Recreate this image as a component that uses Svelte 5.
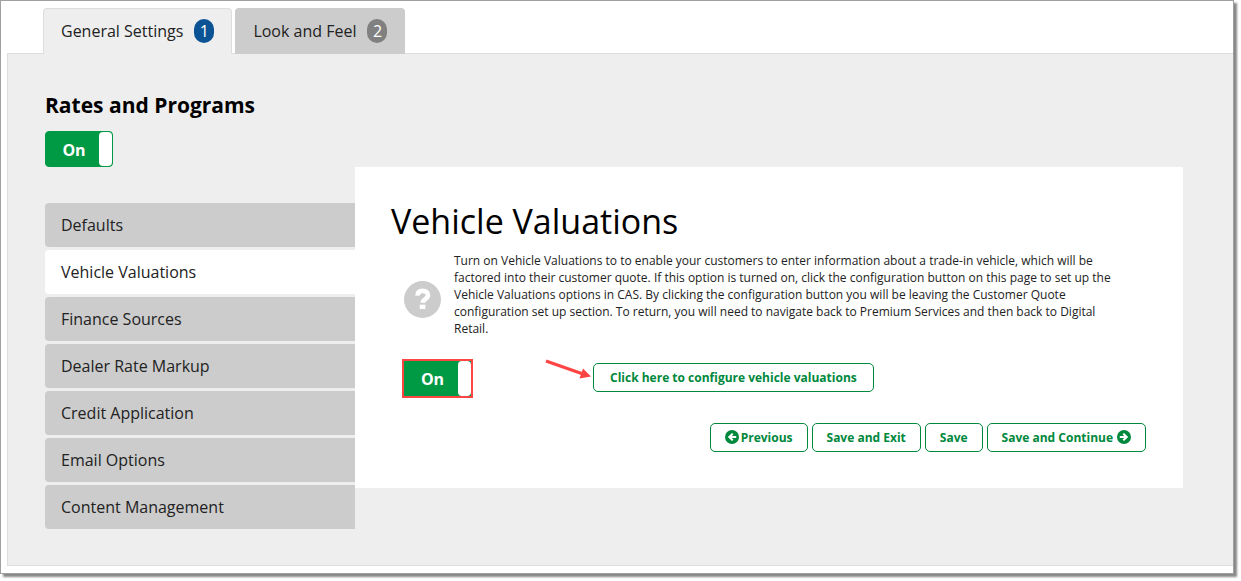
<script lang="ts">
  type Tab = { step: number; label: string };

  const tabs: Tab[] = [
    { step: 1, label: "General Settings" },
    { step: 2, label: "Look and Feel" },
  ];

  const sections = [
    "Defaults",
    "Vehicle Valuations",
    "Finance Sources",
    "Dealer Rate Markup",
    "Credit Application",
    "Email Options",
    "Content Management",
  ];

  let activeTab = $state(1);
  let activeSection = $state("Vehicle Valuations");
  let programsOn = $state(true);
  let valuationsOn = $state(true);
</script>

{#snippet arrowIcon(direction: "left" | "right")}
  <svg
    class="btn__icon"
    class:btn__icon--left={direction === "left"}
    viewBox="0 0 14 14"
    aria-hidden="true"
  >
    <circle cx="7" cy="7" r="7" fill="currentColor" />
    <path d="M2.8 5.9h4.3L5.5 4.3 7 2.9 11.2 7 7 11.1 5.5 9.7l1.6-1.6H2.8z" fill="#fff" />
  </svg>
{/snippet}

<div class="window">
  <nav class="tabs" aria-label="Configuration steps">
    {#each tabs as tab (tab.step)}
      <button
        class="tabs__item"
        class:tabs__item--active={tab.step === activeTab}
        onclick={() => (activeTab = tab.step)}
      >
        <span>{tab.label}</span>
        <span class="tabs__badge">{tab.step}</span>
      </button>
    {/each}
  </nav>

  <main class="panel">
    <h2 class="panel__title">Rates and Programs</h2>
    <label class="toggle">
      <input
        class="toggle__input"
        type="checkbox"
        aria-label="Rates and Programs"
        bind:checked={programsOn}
      />
      <span class="toggle__text">{programsOn ? "On" : "Off"}</span>
      <span class="toggle__handle"></span>
    </label>

    <div class="panel__body">
      <ul class="sections">
        {#each sections as section (section)}
          <li>
            <a
              class="sections__link"
              class:sections__link--active={section === activeSection}
              href="#{section.toLowerCase().replaceAll(' ', '-')}"
              onclick={() => (activeSection = section)}>{section}</a
            >
          </li>
        {/each}
      </ul>

      <section class="card">
        <h1 class="card__title">Vehicle Valuations</h1>

        <div class="help">
          <svg class="help__icon" viewBox="0 0 37 37" aria-hidden="true">
            <circle cx="18.500" cy="18.500" r="18.500" fill="#ccc" />
            <path
              d="M13.400 14.600C13.600 11 16 9.900 18.700 9.900c3.300 0 5.300 1.600 5.300 4.200 0 4.400-5.200 3.700-5.200 7.700"
              fill="none"
              stroke="#fff"
              stroke-width="4.600"
            />
            <path d="M15.800 23.700h5.600V28h-5.600z" fill="#fff" />
          </svg>
          <p class="help__text">
            Turn on Vehicle Valuations to to enable your customers to enter
            information about a trade-in vehicle, which will be factored into
            their customer quote. If this option is turned on, click the
            configuration button on this page to set up the Vehicle Valuations
            options in CAS. By clicking the configuration button you will be
            leaving the Customer Quote configuration set up section. To return,
            you will need to navigate back to Premium Services and then back to
            Digital Retail.
          </p>
        </div>

        <div class="configure">
          <label class="toggle toggle--marked">
            <input
              class="toggle__input"
              type="checkbox"
              aria-label="Vehicle Valuations"
              bind:checked={valuationsOn}
            />
            <span class="toggle__text">{valuationsOn ? "On" : "Off"}</span>
            <span class="toggle__handle"></span>
          </label>
          <div class="configure__target">
            <svg class="configure__arrow" viewBox="0 0 48 22" aria-hidden="true">
              <path d="M1 2L38 15" stroke="#ff4444" stroke-width="3" />
              <path d="M46 17.500L34.500 19.500 38 9.500z" fill="#ff4444" />
            </svg>
            <button class="btn btn--wide">
              Click here to configure vehicle valuations
            </button>
          </div>
        </div>

        <div class="actions">
          <button class="btn">{@render arrowIcon("left")}Previous</button>
          <button class="btn">Save and Exit</button>
          <button class="btn">Save</button>
          <button class="btn">Save and Continue{@render arrowIcon("right")}</button>
        </div>
      </section>
    </div>
  </main>
</div>

<style>
  :global(body) {
    background: #fff;
    font-family: "Open Sans", sans-serif;
    color: #222;
  }

  .window {
    margin: 0 7px 7px 0;
    padding: 7px 0 7px 6px;
    border: 1px solid #a0a0a0;
    box-shadow: 3px 3px 2px #888;
  }

  .tabs {
    display: flex;
    gap: 3px;
    padding-left: 36px;
  }

  .tabs__item {
    display: flex;
    align-items: center;
    gap: 11px;
    height: 46px;
    margin-bottom: -1px;
    padding: 0 17px 2px;
    font: inherit;
    font-size: 16px;
    color: #222;
    background: #ccc;
    border: 1px solid #ccc;
    border-bottom: 0;
    border-radius: 4px 4px 0 0;
  }

  .tabs__item--active {
    position: relative;
    background: #eee;
    border-color: #ddd;
  }

  .tabs__badge {
    width: 20px;
    line-height: 24px;
    border-radius: 10px;
    text-align: center;
    color: #fff;
    background: #808080;
  }

  .tabs__item--active .tabs__badge {
    background: #0b5394;
  }

  .panel {
    padding: 36px 50px 36px 37px;
    background: #eee;
    border: 1px solid #ddd;
    border-right: 0;
  }

  .panel__title {
    margin: 0 0 11px;
    font-size: 21px;
    line-height: 30px;
    font-weight: 700;
    color: #000;
  }

  .panel__body {
    display: grid;
    grid-template-columns: 310px 1fr;
    align-items: start;
  }

  .toggle {
    display: flex;
    box-sizing: border-box;
    width: 68px;
    height: 36px;
    border: 1px solid #094;
    border-radius: 4px;
    background: #094;
    cursor: pointer;
  }

  .toggle__input {
    position: absolute;
    opacity: 0;
  }

  .toggle__text {
    flex: 1;
    padding-left: 3px;
    text-align: center;
    font-size: 16px;
    line-height: 36px;
    font-weight: 700;
    color: #fff;
  }

  .toggle__handle {
    width: 13px;
    border-radius: 4px;
    background: #fff;
  }

  .toggle--marked {
    width: 69px;
    height: 37px;
    border-radius: 0;
    outline: 2px solid #ff4444;
    outline-offset: -1px;
  }

  .sections {
    display: flex;
    flex-direction: column;
    gap: 3px;
    margin: 36px 0 0;
    padding: 0;
    list-style: none;
  }

  .sections__link {
    display: block;
    padding: 0 16px;
    font-size: 16px;
    line-height: 44px;
    color: #222;
    text-decoration: none;
    background: #ccc;
    border-radius: 4px 0 0 4px;
  }

  .sections__link--active {
    background: #fff;
  }

  .card {
    padding: 30px 37px 36px 36px;
    background: #fff;
  }

  .card__title {
    margin: 0 0 7px;
    font-size: 34px;
    line-height: 48px;
    font-weight: 400;
    color: #000;
  }

  .help {
    display: flex;
    align-items: center;
    gap: 13px;
    padding: 0 16px 0 13px;
  }

  .help__icon {
    flex: none;
    width: 37px;
    height: 37px;
    margin-top: 10px;
  }

  .help__text {
    margin: 0;
    font-size: 12px;
    line-height: 17px;
  }

  .configure {
    display: flex;
    align-items: flex-start;
    gap: 121px;
    margin-top: 23px;
    padding-left: 12px;
  }

  .configure__target {
    position: relative;
    padding-top: 3px;
  }

  .configure__arrow {
    position: absolute;
    top: -1px;
    right: 100%;
    width: 48px;
    height: 22px;
  }

  .btn {
    display: inline-flex;
    align-items: center;
    height: 29px;
    padding: 0 14px;
    font: inherit;
    font-size: 12px;
    font-weight: 700;
    color: #00883c;
    background: #fff;
    border: 1px solid #00883c;
    border-radius: 5px;
    white-space: nowrap;
  }

  .btn--wide {
    padding: 0 16px;
  }

  .btn__icon {
    width: 14px;
    height: 14px;
    margin: 0 0 2px 4px;
  }

  .btn__icon--left {
    margin: 0 2px 2px 0;
    transform: scaleX(-1);
  }

  .actions {
    display: flex;
    justify-content: flex-end;
    gap: 4px;
    margin-top: 26px;
  }
</style>
